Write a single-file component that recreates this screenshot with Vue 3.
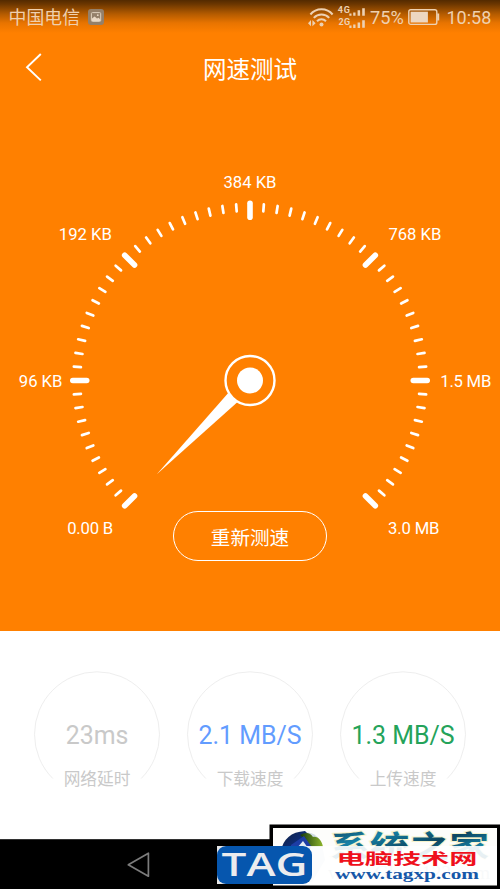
<script setup>
const cx = 250
const cy = 380.5
const ticks = Array.from({ length: 61 }, (_, i) => {
  const angle = ((-225 + i * 4.5) * Math.PI) / 180
  const major = i % 10 === 0
  const inner = major ? 163.3 : 169.6
  const outer = major ? 177.2 : 176.7
  return {
    major,
    x1: cx + inner * Math.cos(angle),
    y1: cy + inner * Math.sin(angle),
    x2: cx + outer * Math.cos(angle),
    y2: cy + outer * Math.sin(angle),
  }
})
const labels = [
  { text: '0.00 B', x: 90.2, y: 534.3, w: 46 },
  { text: '96 KB', x: 40.6, y: 387, w: 43.5 },
  { text: '192 KB', x: 85.3, y: 240.3, w: 53 },
  { text: '384 KB', x: 250, y: 188.4, w: 53 },
  { text: '768 KB', x: 414.9, y: 240.3, w: 53 },
  { text: '1.5 MB', x: 465.8, y: 387, w: 51 },
  { text: '3.0 MB', x: 413.7, y: 534.3, w: 51.5 },
]
const metrics = [
  { value: '23ms', name: '网络延时', tone: 'muted' },
  { value: '2.1 MB/S', name: '下载速度', tone: 'blue' },
  { value: '1.3 MB/S', name: '上传速度', tone: 'green' },
]
</script>

<template>
  <main class="screen">
    <section class="test">
      <header class="status">
        <span class="carrier">中国电信</span>
        <svg class="photo" width="16" height="16" viewBox="0 0 16 16">
          <rect width="16" height="16" rx="3" fill="#94806a" />
          <rect x="3.4" y="3.6" width="9.3" height="8.8" rx="1" fill="none" stroke="#ded0bd" stroke-width="1" />
          <path d="M4 9.5 6.6 7.6 9 9.5 10.8 8.8 12.4 10.8V12H4Z" fill="#ead9c5" />
          <circle cx="9.8" cy="6.2" r=".9" fill="#ead9c5" />
        </svg>
        <span class="grow"></span>
        <svg class="radio" width="60" height="26" viewBox="0 0 60 26">
          <g fill="none" stroke="#edd1b3" stroke-width="2">
            <path d="M2.4 13.5A14.5 14.5 0 0 1 24.6 13.5" />
            <path d="M5.8 16.9A10.5 10.5 0 0 1 21.2 16.9" />
            <path d="M9 20.2A6.3 6.3 0 0 1 18 20.2" />
          </g>
          <g fill="#edd1b3">
            <circle cx="13.5" cy="23.4" r="2" />
            <path d="M0 22.2 3 19v6.2ZM7.6 22.2 4.4 19v6.2Z" />
            <text class="net" x="29.8" y="12" textLength="12">4G</text>
            <text class="net" x="30.6" y="23.6" textLength="11.5">2G</text>
            <path d="M41.3 12.5h2.2v2.3h-2.2zM45.2 11.5h2.3v3.3h-2.3zM49.6 9.3h2.5v5.5h-2.5zM54.2 7.3h2.6v7.5h-2.6zM41.3 24.6h2.2v2.3h-2.2zM45.2 23.4h2.3v3.6h-2.3zM49.6 21.4h2.5v5.5h-2.5zM54.2 19.3h2.6v7.5h-2.6z" />
          </g>
        </svg>
        <span class="percent">75%</span>
        <svg class="battery" width="32" height="18" viewBox="0 0 32 18">
          <rect x=".8" y="1.8" width="28" height="14.6" rx="2" fill="none" stroke="#edd1b3" stroke-width="1.4" />
          <rect x="2.6" y="3.7" width="17.3" height="10.8" fill="#edd7c1" />
          <path d="M30.2 5.5v7" stroke="#edd1b3" stroke-width="2" />
        </svg>
        <span class="clock">10:58</span>
      </header>

      <div class="titlebar">
        <svg class="back" width="18" height="30" viewBox="0 0 18 30">
          <path d="M15.8 2 2 15.3 15.8 28.4" fill="none" stroke="#fff" stroke-width="1.9" />
        </svg>
        <h1>网速测试</h1>
      </div>

      <svg class="gauge" width="500" height="390" viewBox="0 160 500 390">
        <line
          v-for="(t, i) in ticks"
          :key="i"
          :x1="t.x1"
          :y1="t.y1"
          :x2="t.x2"
          :y2="t.y2"
          :stroke-width="t.major ? 5.6 : 2.7"
          stroke="#fff"
          stroke-linecap="round"
        />
        <path d="M156.8 474.2 228 393.2 237.3 402.3Z" fill="#fff" />
        <circle :cx="cx" :cy="cy" r="24.5" fill="#ff8000" stroke="#fff" stroke-width="2.4" />
        <circle :cx="cx" :cy="cy" r="13" fill="#fff" />
        <text
          v-for="l in labels"
          :key="l.text"
          class="scale"
          :x="l.x"
          :y="l.y"
          :textLength="l.w"
          text-anchor="middle"
        >{{ l.text }}</text>
      </svg>
      <button class="retry">重新测速</button>
    </section>

    <section class="metrics">
      <div v-for="m in metrics" :key="m.name" class="metric">
        <svg class="ring" width="128" height="110" viewBox="0 0 128 110">
          <path d="M19.8 107.5A62.5 62.5 0 1 1 108.2 107.5" fill="none" stroke="#eee" stroke-width="1" />
        </svg>
        <strong :class="m.tone">{{ m.value }}</strong>
        <span>{{ m.name }}</span>
      </div>
    </section>

    <nav class="nav">
      <svg width="24" height="28" viewBox="0 0 24 28">
        <path d="M21.4 2.2V25.2L1.3 13.8Z" fill="none" stroke="#7c7c7c" stroke-width="1.7" stroke-linejoin="round" />
      </svg>
    </nav>

    <svg class="stamp" width="283" height="65" viewBox="217 824 283 65">
      <defs>
        <linearGradient id="teal" x1="0" y1="0" x2="1" y2="1">
          <stop offset="0" stop-color="#0b3348" />
          <stop offset=".3" stop-color="#1781a6" />
          <stop offset=".55" stop-color="#0d4660" />
          <stop offset=".75" stop-color="#1781a6" />
          <stop offset="1" stop-color="#0a3d55" />
        </linearGradient>
        <linearGradient id="leaf" x1="0" y1="0" x2="1" y2="0">
          <stop offset="0" stop-color="#16380f" />
          <stop offset="1" stop-color="#8db52a" />
        </linearGradient>
        <linearGradient id="navy" x1="0" y1="0" x2="1" y2="1">
          <stop offset="0" stop-color="#10203a" />
          <stop offset="1" stop-color="#0d38b0" />
        </linearGradient>
      </defs>
      <rect x="269.5" y="824.5" width="230.5" height="64.5" fill="#000" />
      <rect x="273" y="828" width="224" height="57.5" fill="#fdfdfb" />
      <path d="M300 834C308 830 319 834 322 845L325 860 312 882 299 880 290 860Z" fill="#cfdbe4" />
      <path d="M281 851C283 839 291 832 305 831L309 835 297 844 290 856Z" fill="url(#navy)" />
      <path d="M300 835C305 832 310 832 313 837 318 836 322 841 323 847H310L307 841Z" fill="url(#leaf)" />
      <path d="M291 845 304 836 311 846 308 856H290Z" fill="#1d3da5" />
      <path d="M297 848 303 841 308 848Z" fill="#e3ebf2" />
      <path d="M281 850 297 862 307 882H294C283 875 279 862 281 850Z" fill="#3f6db4" />
      <text class="home" x="330" y="857" textLength="159" lengthAdjust="spacingAndGlyphs" fill="url(#teal)" stroke="#f6f3cc" stroke-width="2">系统之家</text>
      <text class="ghost" x="328" y="878.5" textLength="162" lengthAdjust="spacingAndGlyphs">www.Ghost123.com</text>
      <rect x="217" y="846" width="280" height="38" fill="#fff" fill-opacity=".9" />
      <rect x="217" y="846" width="95" height="38" rx="9" fill="#0656ae" />
      <text class="tag" x="221.5" y="875.5" textLength="86" lengthAdjust="spacingAndGlyphs">TAG</text>
      <text class="red" x="336.5" y="863.5" textLength="141" lengthAdjust="spacingAndGlyphs">电脑技术网</text>
      <text class="url" x="335" y="879" textLength="144" lengthAdjust="spacingAndGlyphs">www.tagxp.com</text>
    </svg>
  </main>
</template>

<style>
body {
  margin: 0;
}
</style>

<style scoped>
.screen {
  position: relative;
  width: 500px;
  height: 889px;
  overflow: hidden;
  background: #fff;
  font-family: Roboto, "Noto Sans CJK SC", sans-serif;
  display: flex;
  flex-direction: column;
}
.test {
  height: 630.5px;
  flex: none;
  display: flex;
  flex-direction: column;
  align-items: center;
  background: linear-gradient(#532a00 0, #6b3600 4px, #b45b00 14px, #e87400 23px, #ff8000 33px);
}
.status {
  width: 500px;
  height: 34px;
  box-sizing: border-box;
  padding: 0 9px 0 8.5px;
  display: flex;
  align-items: center;
  color: #efd0af;
  font-size: 18px;
  line-height: 34px;
}
.carrier {
  font-size: 17.9px;
  padding-top: 2px;
}
.photo {
  margin-left: 8px;
}
.grow {
  flex: 1;
}
.radio {
  overflow: visible;
  margin-top: -6px;
}
.net {
  font-size: 9px;
  font-weight: 700;
}
.percent {
  width: 38px;
  font-size: 18.2px;
  margin-left: 2px;
  padding-top: 2px;
}
.clock {
  width: 44.5px;
  margin-left: 6.5px;
  font-size: 18px;
  padding-top: 2px;
}
.titlebar {
  width: 500px;
  height: 66px;
  display: grid;
  grid-template-columns: 25px 18px 1fr 43px;
  align-items: center;
}
.back {
  grid-column: 2;
}
h1 {
  margin: 0;
  padding-top: 5px;
  color: #fff;
  font-size: 23.5px;
  font-weight: 400;
  line-height: 34px;
  text-align: center;
}
.gauge {
  flex: none;
  margin-top: 60px;
}
.scale {
  font-size: 16.7px;
  fill: #fff;
}
.retry {
  position: relative;
  flex: none;
  box-sizing: border-box;
  width: 153.5px;
  height: 50px;
  margin-top: -39px;
  padding: 4px 0 0;
  border: 1.5px solid #fff;
  border-radius: 25px;
  background: transparent;
  color: #fff;
  font: 19.6px/43px Roboto, "Noto Sans CJK SC", sans-serif;
}
.metrics {
  flex: 1;
  display: flex;
  justify-content: center;
  gap: 25px;
  padding-top: 40.5px;
}
.metric {
  width: 128px;
  display: grid;
  grid-template-rows: 49px 32px 55px;
  justify-items: center;
  align-content: start;
}
.ring {
  grid-area: 1 / 1 / 4 / 2;
}
strong {
  grid-area: 2 / 1;
  font-size: 24.9px;
  font-weight: 400;
  line-height: 32px;
  white-space: nowrap;
}
.metric span {
  grid-area: 3 / 1;
  padding-top: 16px;
  color: #c9c9c9;
  font-size: 16.7px;
  line-height: 24px;
}
.metric .muted {
  color: #c9c9c9;
}
.blue {
  color: #629cff;
}
.green {
  color: #24a35a;
}
.nav {
  height: 50px;
  flex: none;
  box-sizing: border-box;
  border-top: 1px solid #333;
  padding: 11px 0 0 127px;
  background: #000;
}
.stamp {
  position: absolute;
  right: 0;
  bottom: 0;
}
.home {
  font: 700 30px "Noto Sans CJK SC", sans-serif;
  paint-order: stroke;
}
.ghost {
  font: 18px "Liberation Serif", serif;
  fill: #b4c2cc;
}
.tag {
  font: 600 32.5px "Open Sans", sans-serif;
  fill: #ececee;
}
.red {
  font: 700 15px "Noto Sans CJK SC", sans-serif;
  fill: #ef101c;
}
.url {
  font: 700 15px "Liberation Serif", serif;
  fill: #1557a8;
}
</style>
